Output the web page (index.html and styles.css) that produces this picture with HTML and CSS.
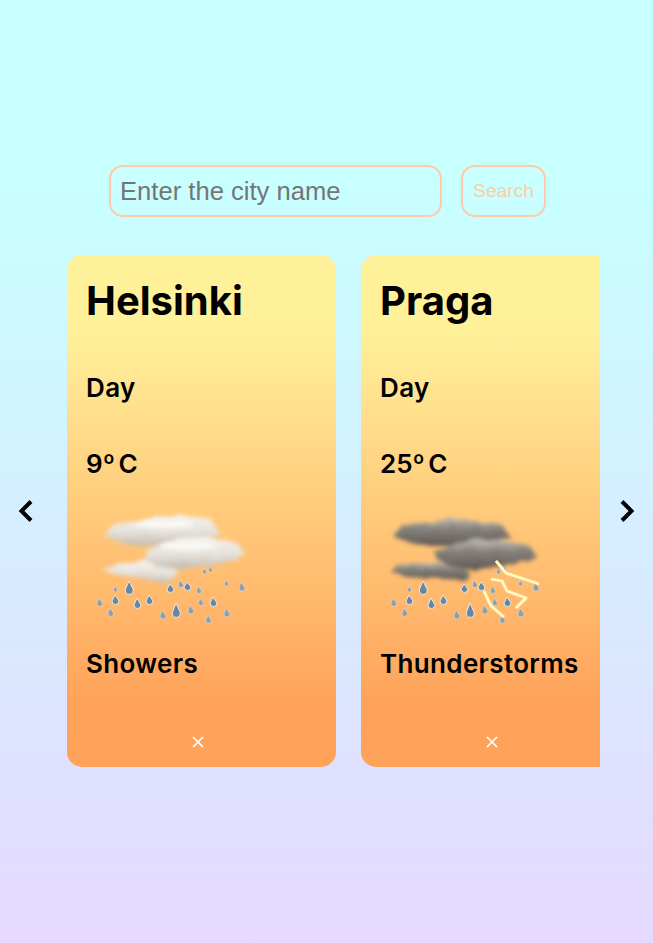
FILE: index.html
```html
<!DOCTYPE html>
<html lang="en">
<head>
<meta charset="utf-8">
<title>Weather</title>
<link rel="stylesheet" href="styles.css">
</head>
<body>
<svg class="defs" width="0" height="0" aria-hidden="true">
  <defs>
    <linearGradient id="lightCloud" x1="0" y1="0" x2="0" y2="1">
      <stop offset="0" stop-color="#f6f3ef"/>
      <stop offset="0.55" stop-color="#e6e1db"/>
      <stop offset="1" stop-color="#c4bbb1"/>
    </linearGradient>
    <linearGradient id="darkCloud" x1="0" y1="0" x2="0" y2="1">
      <stop offset="0" stop-color="#c4bfb9"/>
      <stop offset="0.4" stop-color="#85807a"/>
      <stop offset="1" stop-color="#5f5a56"/>
    </linearGradient>
    <filter id="b1" x="-20%" y="-40%" width="140%" height="180%">
      <feTurbulence type="fractalNoise" baseFrequency="0.08" numOctaves="2" seed="4" result="n"/>
      <feDisplacementMap in="SourceGraphic" in2="n" scale="5" result="d"/>
      <feGaussianBlur in="d" stdDeviation="2"/>
    </filter>
    <filter id="b2" x="-30%" y="-80%" width="160%" height="260%"><feGaussianBlur stdDeviation="2"/></filter>
    <filter id="b3" x="-50%" y="-50%" width="200%" height="200%"><feGaussianBlur stdDeviation="0.7"/></filter>
    <g id="drops" filter="url(#b3)">
      <g class="drop-lg">
        <path d="M43 75l-3.500 8a4 4 0 1 0 7.500 0z"/><path d="M90 97l-3.500 9a4 4 0 1 0 7.500 0z"/><path d="M29 89l-3 6a3.500 3.500 0 1 0 7 0z"/><path d="M51 92l-3 7a3.500 3.500 0 1 0 7 0z"/><path d="M63 89l-3 6a3.500 3.500 0 1 0 7 0z"/><path d="M127 91l-3 6a3.500 3.500 0 1 0 7 0z"/><path d="M101 76l-3 5a3.400 3.400 0 1 0 7 0z"/><path d="M84 78l-3 5a3.400 3.400 0 1 0 7 0z"/>
      </g>
      <g class="drop-sm">
        <path d="M13 92l-2 5a2.800 2.800 0 1 0 5.500 0z"/><path d="M24 102l-2 5a2.800 2.800 0 1 0 5.500 0z"/><path d="M76 104l-2 6a3 3 0 1 0 6 0z"/><path d="M104 99l-2 6a3 3 0 1 0 6 0z"/><path d="M140 102l-2 6a3 3 0 1 0 6 0z"/><path d="M122 109l-2 5a2.600 2.600 0 1 0 5 0z"/><path d="M155 76l-2 6a3 3 0 1 0 6 0z"/><path d="M112 80l-1.500 5a2.400 2.400 0 1 0 5 0z"/><path d="M94 74l-1.500 5a2.400 2.400 0 1 0 5 0z"/><path d="M114 92l-1.500 5a2.400 2.400 0 1 0 5 0z"/><path d="M140 74l-1.500 4a2 2 0 1 0 4 0z"/><path d="M118 62l-1.500 4a2 2 0 1 0 4 0z"/><path d="M124 60l-1.500 4a2 2 0 1 0 4 0z"/><path d="M29 80l-1.500 4a2 2 0 1 0 4 0z"/>
      </g>
    </g>
  </defs>
</svg>
<main class="page">
  <form class="search">
    <input class="search-input" type="text" placeholder="Enter the city name">
    <button class="search-button" type="button">Search</button>
  </form>
  <section class="carousel">
    <button class="arrow arrow-left" type="button" aria-label="Previous">
      <svg class="chevron" width="20" height="28" viewBox="0 0 20 28"><path d="M14 4.500 4.500 14 14 23.500"/></svg>
    </button>
    <div class="viewport">
      <article class="card">
        <h2 class="city">Helsinki</h2>
        <p class="info day">Day</p>
        <p class="info temp">9º C</p>
        <svg class="weather" width="170" height="125" viewBox="0 0 170 125" role="img" aria-label="Showers">
          <use href="#drops"/>
          <g class="cloud-soft" filter="url(#b1)">
            <path d="M17 28 27 19 54 16 74 10 97 9 124 13 134 28 118 38 80 40 45 40 27 34Z"/>
            <path d="M16 64 34 58 57 54 80 60 94 65 77 78 61 74 27 68Z"/>
            <path d="M60 45 80 36 105 31 130 33 151 37 159 48 141 57 94 63 70 60 60 53Z"/>
          </g>
          <g class="cloud-light" filter="url(#b2)">
            <ellipse cx="78" cy="18" rx="30" ry="4"/>
            <ellipse cx="102" cy="40" rx="28" ry="4"/>
          </g>
        </svg>
        <p class="info desc">Showers</p>
        <button class="close" type="button" aria-label="Remove">
          <svg width="12" height="12" viewBox="0 0 12 12"><path d="M1 1 11 11M11 1 1 11"/></svg>
        </button>
      </article>
      <article class="card">
        <h2 class="city">Praga</h2>
        <p class="info day">Day</p>
        <p class="info temp">25º C</p>
        <svg class="weather" width="170" height="125" viewBox="0 0 170 125" role="img" aria-label="Thunderstorms">
          <use href="#drops"/>
          <g class="cloud-dark" filter="url(#b1)">
            <path d="M12 29 21 19 44 18 71 12 94 16 121 18 131 32 110 38 80 40 45 40 27 36Z"/>
            <path d="M11 66 17 59 54 56 80 60 90 66 87 74 67 73 27 71Z"/>
            <path d="M55 46 80 36 100 33 130 36 151 41 157 52 137 57 94 64 70 60 58 54Z"/>
          </g>
          <g class="bolt" filter="url(#b3)">
            <path d="M116 55 126 67 141 72 159 78"/>
            <path d="M111 73 122 75 127 85 146 92 136 102"/>
            <path d="M104 85 111 100 124 111"/>
          </g>
          <g class="bolt-core" filter="url(#b3)">
            <path d="M116 55 126 67 141 72 159 78"/>
            <path d="M111 73 122 75 127 85 146 92 136 102"/>
            <path d="M104 85 111 100 124 111"/>
          </g>
        </svg>
        <p class="info desc">Thunderstorms</p>
        <button class="close" type="button" aria-label="Remove">
          <svg width="12" height="12" viewBox="0 0 12 12"><path d="M1 1 11 11M11 1 1 11"/></svg>
        </button>
      </article>
    </div>
    <button class="arrow arrow-right" type="button" aria-label="Next">
      <svg class="chevron" width="20" height="28" viewBox="0 0 20 28"><path d="M6 4.500 15.500 14 6 23.500"/></svg>
    </button>
  </section>
</main>
</body>
</html>
```

FILE: styles.css
```css
* { box-sizing: border-box; }
html, body { margin: 0; height: 100%; }
body {
  background: linear-gradient(180deg, #c8ffff 0%, #c8ffff 20%, #e6d9ff 100%);
  font-family: "Inter", "Liberation Sans", sans-serif;
  overflow: hidden;
}
.defs { position: absolute; }
.page { height: 943px; padding-top: 165px; }
.search { display: flex; justify-content: center; gap: 19px; padding-left: 2px; }
.search-input {
  width: 333px;
  height: 52px;
  padding: 0 9px;
  background: transparent;
  border: 2px solid #ffcba4;
  border-radius: 14px;
  font: 25.6px "Liberation Sans", Arial, sans-serif;
  outline: none;
}
.search-input::placeholder { color: #757575; opacity: 1; }
.search-button {
  width: 85px;
  height: 52px;
  padding: 0;
  background: transparent;
  border: 2px solid #ffcba4;
  border-radius: 14px;
  color: #ffcba4;
  font: 19.2px "Liberation Sans", Arial, sans-serif;
}
.carousel { display: flex; align-items: center; margin-top: 38px; }
.arrow { padding: 0; background: none; border: 0; display: flex; }
.arrow-left { width: 67px; padding-left: 17px; }
.arrow-right { width: 53px; padding-left: 16px; }
.chevron path { fill: none; stroke: #000; stroke-width: 4; }
.viewport { width: 533px; display: flex; gap: 25px; overflow: hidden; }
.card {
  flex: none;
  width: 269px;
  height: 512px;
  padding: 0 26px 0 19px;
  display: flex;
  flex-direction: column;
  align-items: flex-start;
  border-radius: 15px;
  background: linear-gradient(180deg, #fff09a 0%, #fff09a 15%, #ffa25a 88%, #ffa25a 100%);
  color: #000;
}
.city { margin: 19px 0 0; font-size: 40px; line-height: 54px; font-weight: 700; }
.info { margin: 0; font-size: 26px; line-height: 36px; font-weight: 600; letter-spacing: 0.35px; }
.day { margin-top: 42px; }
.temp { margin-top: 40px; word-spacing: -3px; letter-spacing: 0; }
.weather { display: block; margin-top: 24px; }
.desc { margin-top: 15px; }
.close { margin: auto 0 19px; align-self: center; padding: 0; background: none; border: 0; display: flex; }
.close path { fill: none; stroke: #fff; stroke-width: 1.6; }
.cloud-soft path { fill: url(#lightCloud); }
.cloud-dark path { fill: url(#darkCloud); }
.cloud-light ellipse { fill: #fbf9f6; }
.drop-lg path { fill: #66879f; stroke: #e8e8e6; stroke-width: 1; }
.drop-sm path { fill: #8f9fa8; stroke: #dcdcd8; stroke-width: 0.6; }
.bolt path { fill: none; stroke: #fff09a; stroke-width: 3.2; stroke-linejoin: round; }
.bolt-core path { fill: none; stroke: #fffdf0; stroke-width: 1.2; stroke-linejoin: round; }
```
